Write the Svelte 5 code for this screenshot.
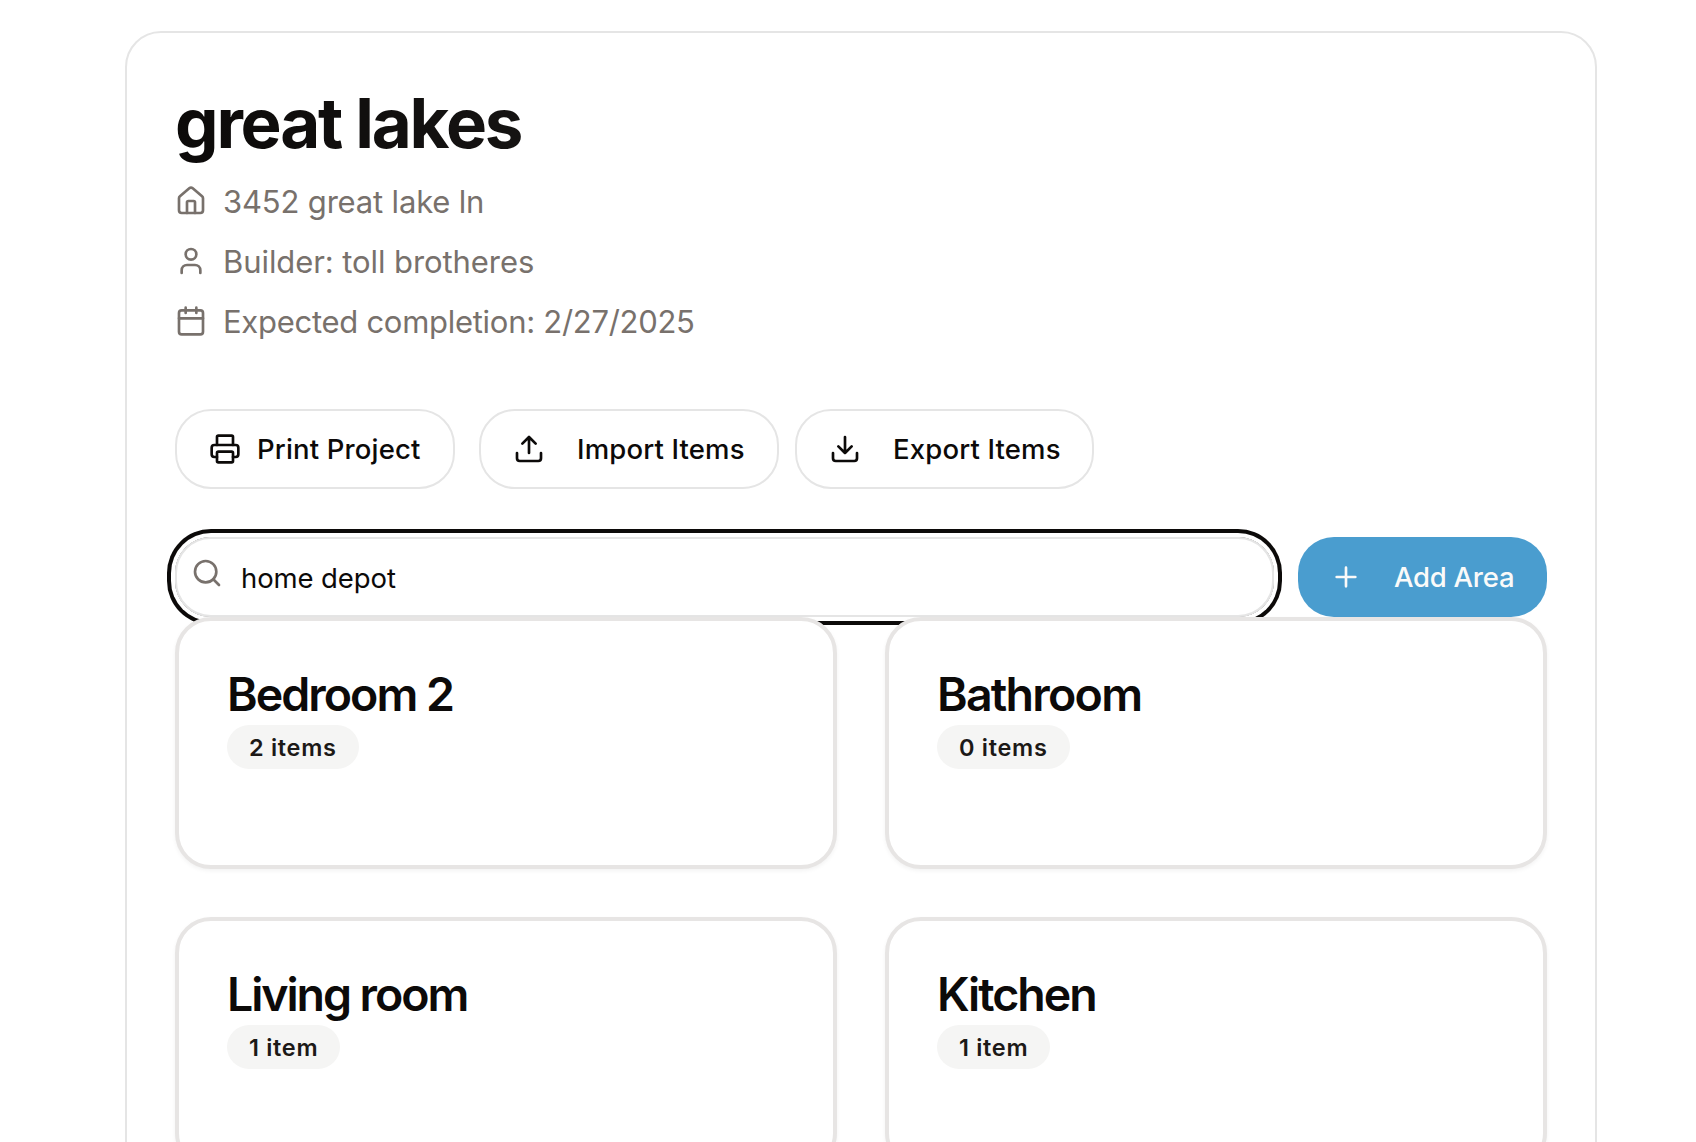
<script>
  const areas = [
    { name: 'Bedroom 2', count: 2, tracking: -1.97 },
    { name: 'Bathroom', count: 0, tracking: -1.75 },
    { name: 'Living room', count: 1, tracking: -2.08 },
    { name: 'Kitchen', count: 1, tracking: -2.03 }
  ];
  let query = $state('home depot');
</script>

{#snippet icon(name)}
  <svg class="icon" viewBox="0 0 24 24" aria-hidden="true">
    {#if name === 'house'}
      <path d="M15 21v-8a1 1 0 0 0-1-1h-4a1 1 0 0 0-1 1v8" />
      <path d="M3 10a2 2 0 0 1 .709-1.528l7-5.999a2 2 0 0 1 2.582 0l7 5.999A2 2 0 0 1 21 10v9a2 2 0 0 1-2 2H5a2 2 0 0 1-2-2z" />
    {:else if name === 'user'}
      <path d="M19 21v-2a4 4 0 0 0-4-4H9a4 4 0 0 0-4 4v2" />
      <circle cx="12" cy="7" r="4" />
    {:else if name === 'calendar'}
      <path d="M8 2v4M16 2v4M3 10h18" />
      <rect x="3" y="4" width="18" height="18" rx="2" />
    {:else if name === 'printer'}
      <path d="M6 18H4a2 2 0 0 1-2-2v-5a2 2 0 0 1 2-2h16a2 2 0 0 1 2 2v5a2 2 0 0 1-2 2h-2" />
      <path d="M6 9V3a1 1 0 0 1 1-1h10a1 1 0 0 1 1 1v6" />
      <rect x="6" y="14" width="12" height="8" rx="1" />
    {:else if name === 'upload'}
      <path d="M21 15v4a2 2 0 0 1-2 2H5a2 2 0 0 1-2-2v-4M17 8l-5-5-5 5M12 3v12" />
    {:else if name === 'download'}
      <path d="M21 15v4a2 2 0 0 1-2 2H5a2 2 0 0 1-2-2v-4M7 10l5 5 5-5M12 15V3" />
    {:else if name === 'search'}
      <circle cx="11" cy="11" r="8" />
      <path d="m21 21-4.3-4.3" />
    {:else if name === 'plus'}
      <path d="M5 12h14M12 5v14" />
    {/if}
  </svg>
{/snippet}

<main class="project">
  <header>
    <h1>great lakes</h1>
    <ul class="details">
      <li>{@render icon('house')}<span class="address">3452 great lake ln</span></li>
      <li>{@render icon('user')}<span class="builder">Builder: toll brotheres</span></li>
      <li>{@render icon('calendar')}<span>Expected completion: 2/27/2025</span></li>
    </ul>
  </header>

  <div class="actions">
    <button class="btn print">{@render icon('printer')}<span>Print Project</span></button>
    <div class="transfer">
      <button class="btn wide">{@render icon('upload')}<span>Import Items</span></button>
      <button class="btn wide export">{@render icon('download')}<span>Export Items</span></button>
    </div>
  </div>

  <div class="toolbar">
    <label class="search">
      {@render icon('search')}
      <input type="text" bind:value={query} aria-label="Search items" />
    </label>
    <button class="btn wide add">{@render icon('plus')}<span>Add Area</span></button>
  </div>

  <section class="areas">
    {#each areas as area}
      <article class="area">
        <h2 style:letter-spacing="{area.tracking}px">{area.name}</h2>
        <span class="badge">{area.count} {area.count === 1 ? 'item' : 'items'}</span>
      </article>
    {/each}
  </section>
</main>

<style>
  :global(body) {
    background: #fff;
    overflow: hidden;
  }
  :global(#app) {
    height: 1142px;
    overflow: hidden;
  }
  * {
    box-sizing: border-box;
  }
  .project {
    width: 1472px;
    height: 1300px;
    margin: 31px 0 0 125px;
    padding: 48px;
    border: 2px solid #e5e5e5;
    border-radius: 36px;
    font-family: Inter, 'Liberation Sans', sans-serif;
    color: #0c0a09;
    background: #fff;
  }
  .icon {
    flex: none;
    width: 32px;
    height: 32px;
    fill: none;
    stroke: currentColor;
    stroke-width: 2;
    stroke-linecap: round;
    stroke-linejoin: round;
  }
  h1 {
    margin: 0;
    font-size: 69px;
    line-height: 84px;
    font-weight: 700;
    letter-spacing: -2.2px;
    background: linear-gradient(to right, #0c0a09, #302f2e);
    -webkit-background-clip: text;
    background-clip: text;
    color: transparent;
  }
  .details {
    display: flex;
    flex-direction: column;
    gap: 12px;
    margin: 12px 0 0;
    padding: 0;
    list-style: none;
    font-size: 31px;
    line-height: 48px;
    letter-spacing: -0.28px;
    color: #78716c;
  }
  .details li {
    display: flex;
    align-items: center;
    gap: 16px;
    height: 48px;
  }
  .details span {
    padding-top: 1px;
  }
  .address {
    letter-spacing: -0.17px;
  }
  .builder {
    letter-spacing: -0.08px;
  }
  .actions {
    display: flex;
    gap: 24px;
    margin-top: 64px;
  }
  .transfer {
    display: flex;
    gap: 16px;
  }
  .btn {
    display: flex;
    align-items: center;
    gap: 16px;
    height: 80px;
    padding: 0 32px;
    border: 2px solid #e5e5e5;
    border-radius: 36px;
    background: #fff;
    color: #0c0a09;
    font: 500 27.5px/40px Inter, 'Liberation Sans', sans-serif;
    letter-spacing: 0.16px;
    white-space: nowrap;
  }
  .print {
    width: 280px;
  }
  .wide {
    width: 300px;
    gap: 32px;
  }
  .export {
    width: 299px;
  }
  .toolbar {
    display: flex;
    gap: 24px;
    margin-top: 48px;
  }
  .search {
    display: flex;
    flex: 1;
    gap: 18px;
    height: 80px;
    padding: 18px 14px;
    border: 2px solid #e5e5e5;
    border-radius: 36px;
    box-shadow: 0 0 0 4px #fff, 0 0 0 8px #0c0a09;
    color: #78716c;
  }
  input {
    flex: 1;
    height: 42px;
    padding: 0;
    border: 0;
    outline: 0;
    background: none;
    color: #0c0a09;
    font: 400 27.5px/42px Inter, 'Liberation Sans', sans-serif;
    letter-spacing: -0.1px;
  }
  .add {
    width: 249px;
    border: 0;
    background: #4a9dcf;
    color: #fafaf9;
    font-weight: 450;
    letter-spacing: -0.25px;
  }
  .areas {
    position: relative;
    display: grid;
    grid-template-columns: 1fr 1fr;
    gap: 48px;
  }
  .area {
    height: 252px;
    padding: 48px;
    border: 4px solid #e7e5e4;
    border-radius: 36px;
    background: #fff;
    box-shadow: 0 2px 4px rgba(0, 0, 0, 0.05);
  }
  h2 {
    margin: 0 0 6px;
    font-size: 46.5px;
    line-height: 50px;
    font-weight: 600;
  }
  .badge {
    display: flex;
    align-items: center;
    width: fit-content;
    height: 44px;
    padding: 1px 22px 0;
    border-radius: 22px;
    background: #f5f5f4;
    color: #1c1917;
    font-size: 23.5px;
    font-weight: 600;
    letter-spacing: 0.7px;
  }
</style>
